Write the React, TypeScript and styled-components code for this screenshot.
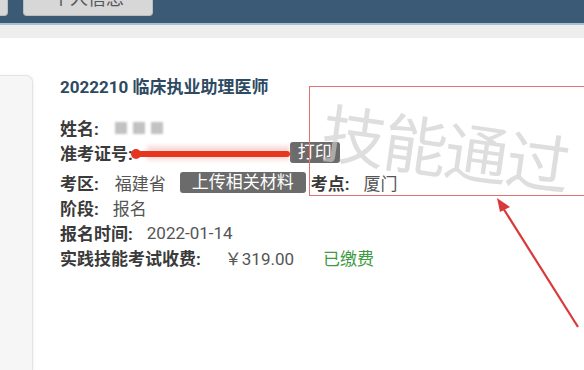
import React from "react";
import styled, { createGlobalStyle } from "styled-components";

const GlobalStyle = createGlobalStyle`
  html, body {
    margin: 0;
    padding: 0;
    background: #fff;
    font-family: Roboto, "Noto Sans CJK SC", sans-serif;
  }
`;

const Page = styled.div`
  position: relative;
  width: 584px;
  height: 370px;
  overflow: hidden;
  background: #fff;
`;

const Header = styled.div`
  height: 23px;
  background: #3b5a76;
  border-bottom: 2px solid #a7c0d4;
  display: flex;
`;

const Tab = styled.div<{ $w: number; $ml?: number }>`
  width: ${(p) => p.$w}px;
  margin-left: ${(p) => p.$ml ?? 0}px;
  height: 16px;
  background: #d7d7d7;
  border: 1px solid #bdbdbd;
  border-top: none;
  border-radius: 0 0 4px 4px;
  display: flex;
  justify-content: center;
  align-items: flex-end;
  overflow: hidden;
  box-sizing: border-box;
`;

const TabLabel = styled.span`
  font-size: 18px;
  line-height: 18px;
  margin-bottom: 7px;
  color: #555;
`;

const Band = styled.div`
  height: 13px;
  background: #eeeeee;
`;

const Body = styled.div`
  display: flex;
  height: 332px;
`;

const SidePanel = styled.div`
  width: 33px;
  margin-top: 37px;
  background: #f6f6f6;
  border: 1px solid #e4e4e4;
  border-left: none;
  border-bottom: none;
  border-radius: 0 7px 0 0;
  box-shadow: 1px 0 3px rgba(0, 0, 0, 0.05);
  box-sizing: border-box;
`;

const Content = styled.div`
  padding: 38px 0 0 27px;
  display: flex;
  flex-direction: column;
`;

const Title = styled.h1`
  margin: 0 0 17px;
  font-size: 17px;
  line-height: 22px;
  font-weight: 700;
  color: #2e4a62;
`;

const Row = styled.div<{ $mb?: number }>`
  display: flex;
  align-items: center;
  height: 25px;
  margin-bottom: ${(p) => p.$mb ?? 0}px;
  font-size: 17px;
  white-space: nowrap;
`;

const Label = styled.span<{ $ml?: number }>`
  margin-left: ${(p) => p.$ml ?? 0}px;
  font-weight: 700;
  color: #3a3a3a;
`;

const Value = styled.span<{ $ml?: number; $green?: boolean }>`
  margin-left: ${(p) => p.$ml ?? 14}px;
  color: ${(p) => (p.$green ? "#3f9a45" : "#555")};
`;

const GreyButton = styled.span<{ $ml: number; $px: number }>`
  margin-left: ${(p) => p.$ml}px;
  padding: 0 ${(p) => p.$px}px;
  height: 21px;
  line-height: 21px;
  background: #6b6b6b;
  color: #fff;
  font-size: 17px;
  border-radius: 3px;
`;

const Blurred = styled.span`
  margin-left: 16px;
  display: flex;
  gap: 6px;
  filter: blur(1.3px);
`;

const BlurBlock = styled.span`
  width: 12px;
  height: 12px;
  background: #c2c2c2;
`;

const Redacted = styled.span`
  position: relative;
  width: 157px;
  height: 22px;
`;

const Haze = styled.span`
  position: absolute;
  left: 14px;
  right: 0;
  top: 4px;
  height: 14px;
  background: rgba(240, 150, 140, 0.35);
  filter: blur(2px);
`;

const Stroke = styled.span`
  position: absolute;
  left: 0;
  right: 0;
  top: 9px;
  height: 6px;
  border-radius: 3px;
  background: #e6361f;
`;

const Dot = styled.span`
  position: absolute;
  left: -2px;
  top: 7px;
  width: 10px;
  height: 10px;
  border-radius: 50%;
  background: #e6361f;
`;

const MarkBox = styled.div`
  position: absolute;
  left: 309px;
  top: 86px;
  width: 290px;
  height: 110px;
  border: 1.5px solid #e07474;
  box-sizing: border-box;
  pointer-events: none;
`;

const Watermark = styled.div`
  position: absolute;
  left: 12px;
  top: 8px;
  font-size: 64px;
  line-height: 80px;
  font-weight: 400;
  color: rgba(205, 205, 205, 0.65);
  transform: rotate(8deg);
  transform-origin: left center;
  letter-spacing: -2px;
  white-space: nowrap;
`;

const Overlay = styled.svg`
  position: absolute;
  left: 0;
  top: 0;
  pointer-events: none;
`;

function App() {
  return (
    <Page>
      <GlobalStyle />
      <Header>
        <Tab $w={24} $ml={-16} />
        <Tab $w={130} $ml={15}>
          <TabLabel>个人信息</TabLabel>
        </Tab>
      </Header>
      <Band />
      <Body>
        <SidePanel />
        <Content>
          <Title>2022210 临床执业助理医师</Title>
          <Row>
            <Label>姓名:</Label>
            <Blurred>
              <BlurBlock />
              <BlurBlock />
              <BlurBlock />
            </Blurred>
          </Row>
          <Row $mb={5}>
            <Label>准考证号:</Label>
            <Redacted>
              <Haze />
              <Stroke />
              <Dot />
            </Redacted>
            <GreyButton $ml={0} $px={8}>
              打印
            </GreyButton>
          </Row>
          <Row>
            <Label>考区:</Label>
            <Value $ml={16}>福建省</Value>
            <GreyButton $ml={14} $px={12}>
              上传相关材料
            </GreyButton>
            <Label $ml={5}>考点:</Label>
            <Value>厦门</Value>
          </Row>
          <Row>
            <Label>阶段:</Label>
            <Value>报名</Value>
          </Row>
          <Row>
            <Label>报名时间:</Label>
            <Value>2022-01-14</Value>
          </Row>
          <Row>
            <Label>实践技能考试收费:</Label>
            <Value $ml={24}>￥319.00</Value>
            <Value $ml={29} $green>
              已缴费
            </Value>
          </Row>
        </Content>
      </Body>
      <MarkBox>
        <Watermark>技能通过</Watermark>
      </MarkBox>
      <Overlay width="584" height="370" viewBox="0 0 584 370">
        <line x1="578" y1="327" x2="503" y2="208" stroke="#d9393b" strokeWidth="2.2" />
        <polygon points="497,198 510,207 500,212" fill="#d9393b" />
      </Overlay>
    </Page>
  );
}

export default App;
